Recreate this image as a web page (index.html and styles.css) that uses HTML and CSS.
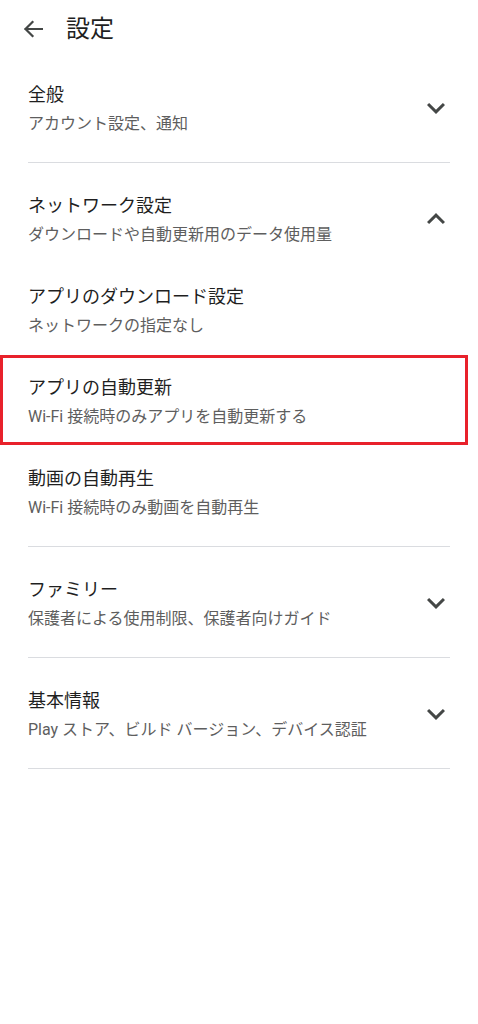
FILE: index.html
```html
<!DOCTYPE html>
<html lang="ja">
<head>
<meta charset="utf-8">
<title>設定</title>
<link rel="stylesheet" href="styles.css">
</head>
<body>
<header class="appbar">
  <svg class="back" width="20" height="18" viewBox="0 0 20 18" aria-hidden="true">
    <path d="M19 9H2.5M9.5 2L2.5 9l7 7" fill="none" stroke="#444746" stroke-width="2.2" stroke-linecap="square" stroke-linejoin="miter"/>
  </svg>
  <h1 class="appbar-title">設定</h1>
</header>

<main class="settings">
  <section class="group">
    <div class="row">
      <div class="row-text">
        <div class="row-title">全般</div>
        <div class="row-sub">アカウント設定、通知</div>
      </div>
      <svg class="chev" width="36" height="36" viewBox="0 0 24 24" aria-hidden="true"><path d="M16.59 8.59L12 13.17 7.41 8.59 6 10l6 6 6-6z" fill="#444746"/></svg>
    </div>
  </section>

  <section class="group">
    <div class="row">
      <div class="row-text">
        <div class="row-title">ネットワーク設定</div>
        <div class="row-sub">ダウンロードや自動更新用のデータ使用量</div>
      </div>
      <svg class="chev" width="36" height="36" viewBox="0 0 24 24" aria-hidden="true"><path d="M12 8l-6 6 1.41 1.41L12 10.83l4.59 4.58L18 14z" fill="#444746"/></svg>
    </div>
    <div class="row">
      <div class="row-text">
        <div class="row-title">アプリのダウンロード設定</div>
        <div class="row-sub">ネットワークの指定なし</div>
      </div>
    </div>
    <div class="row row-marked">
      <div class="row-text">
        <div class="row-title">アプリの自動更新</div>
        <div class="row-sub">Wi-Fi 接続時のみアプリを自動更新する</div>
      </div>
      <span class="highlight" aria-hidden="true"></span>
    </div>
    <div class="row">
      <div class="row-text">
        <div class="row-title">動画の自動再生</div>
        <div class="row-sub">Wi-Fi 接続時のみ動画を自動再生</div>
      </div>
    </div>
  </section>

  <section class="group">
    <div class="row">
      <div class="row-text">
        <div class="row-title">ファミリー</div>
        <div class="row-sub">保護者による使用制限、保護者向けガイド</div>
      </div>
      <svg class="chev" width="36" height="36" viewBox="0 0 24 24" aria-hidden="true"><path d="M16.59 8.59L12 13.17 7.41 8.59 6 10l6 6 6-6z" fill="#444746"/></svg>
    </div>
  </section>

  <section class="group">
    <div class="row">
      <div class="row-text">
        <div class="row-title">基本情報</div>
        <div class="row-sub">Play ストア、ビルド バージョン、デバイス認証</div>
      </div>
      <svg class="chev" width="36" height="36" viewBox="0 0 24 24" aria-hidden="true"><path d="M16.59 8.59L12 13.17 7.41 8.59 6 10l6 6 6-6z" fill="#444746"/></svg>
    </div>
  </section>
</main>
</body>
</html>
```

FILE: styles.css
```css
html, body {
  margin: 0;
  padding: 0;
  background: #ffffff;
}

body {
  width: 478px;
  font-family: Roboto, "Noto Sans CJK JP", sans-serif;
  color: #1f1f1f;
}

.appbar {
  height: 58px;
  display: flex;
  align-items: center;
  padding-left: 23px;
}

.back {
  display: block;
  flex: none;
}

.appbar-title {
  margin: 0 0 0 23px;
  font-size: 24px;
  font-weight: 400;
  line-height: 32px;
  color: #1f1f1f;
}

.settings {
  padding: 0 28px;
}

.group {
  display: flex;
  flex-direction: column;
  gap: 39px;
  padding: 25px 0 27px;
  border-bottom: 1px solid #dadce0;
}

.group + .group {
  padding-top: 31px;
}

.row {
  position: relative;
  display: flex;
  align-items: center;
  justify-content: space-between;
}

.row-text {
  display: flex;
  flex-direction: column;
  gap: 6px;
}

.row-title {
  font-size: 18px;
  line-height: 24px;
  color: #1f1f1f;
}

.row-sub {
  font-size: 16px;
  line-height: 22px;
  color: #5e5e5e;
}

.chev {
  display: block;
  flex: none;
  margin-right: -4px;
  margin-top: -2px;
}

.highlight {
  position: absolute;
  top: -21px;
  bottom: -17px;
  left: -28px;
  right: -18px;
  border: 3px solid #e8212b;
  pointer-events: none;
}
```
